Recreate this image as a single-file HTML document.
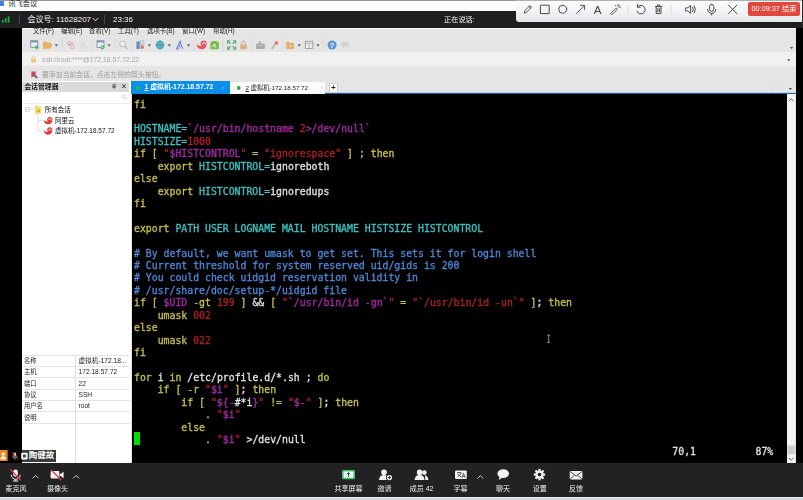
<!DOCTYPE html>
<html lang="zh">
<head>
<meta charset="utf-8">
<title>讯飞会议</title>
<style>
*{margin:0;padding:0;box-sizing:border-box}
html,body{width:803px;height:500px;overflow:hidden;background:#000}
body{position:relative;font-family:"Liberation Sans","Noto Sans CJK SC",sans-serif;color:#000}
.a{position:absolute;white-space:nowrap}
#root{position:absolute;left:0;top:0;width:803px;height:500px;overflow:hidden;filter:blur(0.400px)}
svg.ov{position:absolute;left:0;top:0;width:803px;height:500px;pointer-events:none}
#title{left:0;top:0;width:803px;height:10.600px;background:#fcfcfc;border-top:1px solid #9a9a9a}
#title .t{left:8.200px;top:-2.300px;font-size:7.300px;line-height:10px;color:#1a1a1a}
#title .ic{left:0;top:0.400px;width:3.500px;height:5px;background:#4a80e0}
#meet{left:0;top:10.600px;width:803px;height:17.400px;background:#1f1f1f}
#meet .t{font-size:8px;line-height:16px;color:#f4f4f4;top:1.400px}
#meet .sep{top:4px;width:1px;height:9px;background:#484848}
#sharebar{left:516px;top:0;width:286px;height:21.600px;background:linear-gradient(#fbfbfb,#f2f3f5 50%,#e4e6ea);border-top:1px solid #b0b0b0;border-radius:0 0 0 3px}
#endbtn{left:748px;top:2.200px;width:52px;height:14px;background:#e0483e;border-radius:2px;color:#fff;font-size:7.300px;line-height:14px;text-align:center}
#xs{left:22px;top:27.700px;width:773.500px;height:436px;background:#e5e5e5}
#xstop{left:22px;top:27.700px;width:773.500px;height:1.300px;background:#f6f6f6}
#menu .t{font-size:6.400px;line-height:8px;color:#222;top:26.500px}
#addr{left:22px;top:52.400px;width:773.500px;height:13.400px;background:#f1f1f1}
#addr .t{left:20px;top:0.200px;font-size:6.850px;line-height:14px;color:#a6a6a6}
#hint .t{left:42px;top:66.500px;font-size:6.850px;line-height:15px;color:#9a9a9a}
#side{left:22px;top:81px;width:109.500px;height:382.600px;background:#fff;border-right:1.500px solid #e2e2e2}
#sidehd{left:22px;top:81.600px;width:107.200px;height:10px;background:#d9d9d9}
#sidehd .t{left:2.200px;top:-1px;font-size:6.900px;line-height:11px;color:#1c1c1c;font-weight:bold}
#srch{left:22px;top:102.500px;width:108px;height:1px;background:#ececec}
.tr{font-size:6.500px;line-height:10px;color:#111}
.pr{left:22px;width:108px;height:1px;background:#e4e4e4}
.pk{left:24px;font-size:6.300px;line-height:10px;color:#222}
.pv{left:78.500px;font-size:6.650px;line-height:10px;color:#222}
#tab1{left:131.200px;top:81.200px;width:98.600px;height:13.200px;background:#0b8ee8;color:#fff;font-size:6.900px;line-height:12.600px;font-weight:bold}
#tab2{left:230px;top:82px;width:95px;height:12px;background:#fbfbfb;color:#222;font-size:6.250px;line-height:11.600px}
#tabplus{left:329px;top:83px;width:8.600px;height:9.600px;background:#fafafa;border:0.700px solid #cfcfcf;font-size:8px;line-height:7.600px;text-align:center;color:#222;font-weight:bold}
#blue{left:131.500px;top:91.400px;width:664px;height:3px;background:linear-gradient(#dbe6f2 0,#dbe6f2 45%,#2a6aa8 80%,#0a2440 100%)}
#term{left:131.500px;top:94.400px;width:655.500px;height:369.200px;background:#000}
#term pre,.st{position:absolute;font-family:"DejaVu Sans Mono","Liberation Mono",monospace;font-size:9.830px;line-height:12.420px;color:#e0e0e0;font-weight:normal;-webkit-text-stroke:0.300px currentColor}
#term pre{left:2.500px;top:4.200px}
.y{color:#c8c04c}.c{color:#3cc4c4}.m{color:#a628a6}.r{color:#ac2222}.b{color:#4e88d8}
#cursor{left:2.500px;top:337.900px;width:6px;height:12.400px;background:#00dc00}
#sb{left:786.700px;top:94.400px;width:8.800px;height:369.200px;background:#f4f4f4}
#tag{left:21.700px;top:450.200px;width:34px;height:11.600px;background:#3a3a3a;color:#fff;font-size:8.500px;line-height:11.600px;font-weight:bold}
#bot{left:0;top:463.400px;width:803px;height:34.100px;background:#222224}
#bot .l{font-size:7px;line-height:9px;color:#f0f0f0;top:21px;text-align:center}
#strip{left:0;top:497.400px;width:803px;height:3px;background:linear-gradient(#e4eaee,#ccd2d8)}
</style>
</head>
<body>
<div id="root">
<div id="title" class="a"><div class="a ic"></div><div class="a t">讯飞会议</div></div>
<div id="meet" class="a">
  <svg class="a" style="left:2.400px;top:5.400px" width="8" height="6.600" viewBox="0 0 8 9" preserveAspectRatio="none"><rect x="0" y="5.500" width="1.700" height="3.500" fill="#17b24a"/><rect x="2.900" y="3" width="1.700" height="6" fill="#17b24a"/><rect x="5.800" y="0.500" width="1.700" height="8.500" fill="#17b24a"/></svg>
  <div class="a sep" style="left:19px"></div>
  <div class="a t" style="left:27.600px">会议号: 11628207</div>
  <svg class="a" style="left:92px;top:6px" width="7" height="5" viewBox="0 0 7 5"><path d="M0.800 1 L3.500 3.800 L6.200 1" stroke="#ddd" stroke-width="1" fill="none"/></svg>
  <div class="a sep" style="left:104px"></div>
  <div class="a t" style="left:113px">23:36</div>
  <div class="a t" style="left:444px;font-size:7.200px">正在说话:</div>
</div>
<div id="sharebar" class="a"></div>
<div class="a" style="left:802px;top:0;width:1px;height:28px;background:#2a2a2a"></div>
<div id="endbtn" class="a">00:09:37 结束</div>

<div id="xs" class="a"></div>
<div id="xstop" class="a"></div>
<div id="menu">
  <div class="a t" style="left:33px">文件(F)</div>
  <div class="a t" style="left:61px">编辑(E)</div>
  <div class="a t" style="left:89px">查看(V)</div>
  <div class="a t" style="left:118px">工具(T)</div>
  <div class="a t" style="left:147px">选项卡(B)</div>
  <div class="a t" style="left:182px">窗口(W)</div>
  <div class="a t" style="left:213px">帮助(H)</div>
</div>
<div id="addr" class="a"><div class="a t">ssh://root:****@172.18.57.72:22</div></div>
<div id="hint"><div class="a t">要添加当前会话，点击左侧的箭头按钮。</div></div>
<div id="side" class="a"></div>
<div id="sidehd" class="a"><div class="a t">会话管理器</div></div>
<div id="srch" class="a"></div>
<div class="a tr" style="left:44.700px;top:104.900px">所有会话</div>
<div class="a tr" style="left:55px;top:115.600px">阿里云</div>
<div class="a tr" style="left:55px;top:126px">虚拟机-172.18.57.72</div>

<div class="a pr" style="top:354.600px"></div>
<div class="a pr" style="top:365.900px"></div>
<div class="a pr" style="top:377.200px"></div>
<div class="a pr" style="top:388.500px"></div>
<div class="a pr" style="top:399.800px"></div>
<div class="a pr" style="top:411.300px"></div>
<div class="a pr" style="top:422.800px"></div>
<div class="a" style="left:75px;top:354.600px;width:1px;height:109px;background:#e0e0e0"></div>
<div class="a pk" style="top:356px">名称</div><div class="a pv" style="top:356px">虚拟机-172.18...</div>
<div class="a pk" style="top:367.300px">主机</div><div class="a pv" style="top:367.300px">172.18.57.72</div>
<div class="a pk" style="top:378.500px">端口</div><div class="a pv" style="top:378.500px">22</div>
<div class="a pk" style="top:389.700px">协议</div><div class="a pv" style="top:389.700px">SSH</div>
<div class="a pk" style="top:401.200px">用户名</div><div class="a pv" style="top:401.200px">root</div>
<div class="a pk" style="top:412.500px">说明</div>

<div id="blue" class="a"></div>
<div id="tab1" class="a"><span style="margin-left:13.200px"><u>1</u> 虚拟机-172.18.57.72</span></div>
<div id="tab2" class="a"><span style="margin-left:15.500px"><u>2</u> 虚拟机-172.18.57.72</span></div>
<div id="tabplus" class="a">+</div>
<div id="term" class="a">
<pre><span class="y">fi</span>

<span class="c">HOSTNAME</span><span class="c">=</span><span class="m">`/usr/bin/hostname </span><span class="r">2</span><span class="m">&gt;/dev/null`</span>
<span class="c">HISTSIZE</span><span class="c">=</span><span class="r">1000</span>
<span class="y">if [ </span><span class="r">"</span><span class="m">$HISTCONTROL</span><span class="r">"</span><span class="y"> = </span><span class="r">"ignorespace"</span><span class="y"> ] ; then</span>
    <span class="y">export</span> <span class="c">HISTCONTROL=</span>ignoreboth
<span class="y">else</span>
    <span class="y">export</span> <span class="c">HISTCONTROL=</span>ignoredups
<span class="y">fi</span>

<span class="y">export</span> <span class="c">PATH USER LOGNAME MAIL HOSTNAME HISTSIZE HISTCONTROL</span>

<span class="b"># By default, we want umask to get set. This sets it for login shell</span>
<span class="b"># Current threshold for system reserved uid/gids is 200</span>
<span class="b"># You could check uidgid reservation validity in</span>
<span class="b"># /usr/share/doc/setup-*/uidgid file</span>
<span class="y">if [ </span><span class="m">$UID</span> <span class="y">-gt</span> <span class="r">199</span><span class="y"> ]</span> &amp;&amp; <span class="y">[ </span><span class="r">"</span><span class="m">`/usr/bin/id -gn`</span><span class="r">"</span><span class="y"> = </span><span class="r">"`/usr/bin/id -un`"</span><span class="y"> ]</span>; <span class="y">then</span>
    <span class="y">umask</span> <span class="r">002</span>
<span class="y">else</span>
    <span class="y">umask</span> <span class="r">022</span>
<span class="y">fi</span>

<span class="y">for</span> i <span class="y">in</span> /etc/profile.d/*.sh ; <span class="y">do</span>
    <span class="y">if [ -r </span><span class="r">"</span><span class="m">$i</span><span class="r">"</span><span class="y"> ]</span>; <span class="y">then</span>
        <span class="y">if [ </span><span class="r">"</span><span class="m">${-</span>#*i<span class="m">}</span><span class="r">"</span><span class="y"> != </span><span class="r">"</span><span class="m">$-</span><span class="r">"</span><span class="y"> ]</span>; <span class="y">then</span>
            <span class="y">. </span><span class="r">"</span><span class="m">$i</span><span class="r">"</span>
        <span class="y">else</span>
            <span class="y">. </span><span class="r">"</span><span class="m">$i</span><span class="r">"</span> &gt;/dev/null</pre>
  <div id="cursor" class="a"></div>
  <div class="a st" style="left:540.800px;top:352px">70,1</div>
  <div class="a st" style="left:624px;top:352px">87%</div>
</div>
<div id="sb" class="a"></div>
<div id="tag" class="a"><span style="margin-left:7.100px">陶健故</span></div>

<div id="bot" class="a">
  <div class="a l" style="left:0;width:32px">麦克风</div>
  <div class="a l" style="left:41.400px;width:32px">摄像头</div>
  <div class="a l" style="left:329.400px;width:38px">共享屏幕</div>
  <div class="a l" style="left:371.500px;width:26px">邀请</div>
  <div class="a l" style="left:401.600px;width:40px">成员 42</div>
  <div class="a l" style="left:447.400px;width:26px">字幕</div>
  <div class="a l" style="left:490px;width:26px">聊天</div>
  <div class="a l" style="left:526.700px;width:26px">设置</div>
  <div class="a l" style="left:563px;width:26px">反馈</div>
</div>
<div id="strip" class="a"></div>
<svg class="ov" viewBox="0 0 803 500">
<g transform="translate(0 0.500)" opacity="0.820"><rect x="30.7" y="40.3" width="7" height="6.4" fill="#e8f0f8" stroke="#5c7fa6" stroke-width="0.9"/><rect x="30.7" y="40.3" width="7" height="1.6" fill="#5c7fa6"/><path d="M36.6 45v4M34.6 47h4" stroke="#2fa84a" stroke-width="1.3"/>
<path d="M43 41h3.4l1 1.2h3.2l1.6 2.4-1.6 3.6H43z" fill="#e9a443"/>
<path d="M54.699999999999996 44.0h3.2l-1.6 2z" fill="#222"/>
<path d="M62.4 39V50" stroke="#c4c4c4" stroke-width="0.8" stroke-dasharray="1 1"/>
<g stroke="#e58a8a" stroke-width="0.9" fill="none"><circle cx="69" cy="42.5" r="1.6"/><circle cx="72.6" cy="46.6" r="1.8"/><path d="M68 45.5l5.6-3.4"/></g>
<g stroke="#d2d2d2" stroke-width="0.9" fill="none"><circle cx="81" cy="42.5" r="1.6"/><circle cx="84.6" cy="46.6" r="1.8"/><path d="M80 46.5l5.6-4.4"/></g>
<path d="M92 39V50" stroke="#c4c4c4" stroke-width="0.8" stroke-dasharray="1 1"/>
<rect x="97" y="40.3" width="7" height="6.6" fill="#eef3f8" stroke="#5c7fa6" stroke-width="0.9"/><rect x="97" y="40.3" width="7" height="1.6" fill="#5c7fa6"/><circle cx="102.4" cy="46.8" r="2" fill="#2fa84a"/><circle cx="102.4" cy="46.8" r="0.7" fill="#fff"/>
<path d="M107.4 44.0h3.2l-1.6 2z" fill="#222"/>
<path d="M115 39V50" stroke="#c4c4c4" stroke-width="0.8" stroke-dasharray="1 1"/>
<circle cx="122.6" cy="43.4" r="2.9" fill="#f4f4f4" stroke="#a8a8a8" stroke-width="0.9"/><path d="M124.8 45.8l2.6 2.8" stroke="#a8a8a8" stroke-width="1.3"/>
<path d="M132 39V50" stroke="#c4c4c4" stroke-width="0.8" stroke-dasharray="1 1"/>
<rect x="136.4" y="41" width="3.4" height="7.4" fill="#4a78b8"/><rect x="140.4" y="40.4" width="3.6" height="3.4" fill="#d8dde6" stroke="#8090a8" stroke-width="0.5"/><rect x="140.6" y="45" width="3.2" height="3.2" fill="#d9534f"/>
<path d="M147.70000000000002 44.0h3.2l-1.6 2z" fill="#222"/>
<circle cx="160" cy="44.5" r="4.4" fill="#2f97a6"/><path d="M156 43.5q4 -1.5 8 0M156 46q4 1.5 8 0" stroke="#5cb8c4" stroke-width="0.6" fill="none"/>
<path d="M167.70000000000002 44.0h3.2l-1.6 2z" fill="#222"/>
<path d="M176.4 48.6l3.6-8 1 .4-2.6 7.6zM179.6 40.6l3.4 8" stroke="#4a66c8" stroke-width="0.9" fill="none"/><path d="M176 46.4h7" stroke="#7a90d8" stroke-width="0.7"/>
<path d="M187.0 44.0h3.2l-1.6 2z" fill="#222"/>
<path d="M193.5 39V50" stroke="#c4c4c4" stroke-width="0.8" stroke-dasharray="1 1"/>
<g transform="translate(202 44.3) scale(1.189)"><path d="M-4.600 -0.400q0.500 4.200 4.300 4.100q3.800 -0.300 4 -3.600l-3.200 0.700q-2.600 0.700 -5.100 -1.200z" fill="#e0383c"/><circle cx="1.400" cy="-1.100" r="2.600" fill="#e0383c"/><path d="M0.300 -0.500q0.200 -1.700 1.700 -1.400q1.300 0.500 0.500 1.700" stroke="#fff" stroke-width="0.800" fill="none"/></g>
<path d="M210.4 42.2l2-1.6h3.6l3 1.6v5.6l-1 1h-7.6z" fill="#63b32e"/><path d="M212.4 46.6q.6-3 3.4-2.6q-1.6.4-1.4 1.8q.4 1.2 2 .6" stroke="#fff" stroke-width="0.8" fill="none"/>
<path d="M223 39V50" stroke="#c4c4c4" stroke-width="0.8" stroke-dasharray="1 1"/>
<g stroke="#2fa060" stroke-width="1.1" fill="none"><path d="M227.6 43v-2.6h2.6M233 40.4h2.6V43M235.6 46v2.6H233M230.2 48.600h-2.6V46"/><path d="M228 40.800l2.600 2.600M235.200 40.800l-2.600 2.600M235.200 48.200l-2.600-2.600M228 48.200l2.600-2.600"/></g>
<rect x="240.200" y="44" width="6.600" height="4.800" rx="0.600" fill="#d9a566"/><path d="M241.600 44v-1.600a1.900 1.900 0 0 1 3.800 0V44" stroke="#c8a070" stroke-width="1" fill="none"/>
<path d="M251.4 39V50" stroke="#c4c4c4" stroke-width="0.8" stroke-dasharray="1 1"/>
<rect x="256.200" y="43" width="8.600" height="5.400" rx="0.600" fill="#9a9a9a"/><rect x="258.600" y="40.800" width="2.600" height="2.400" fill="#a8a8a8"/><path d="M257.400 45h6.200" stroke="#c8c8c8" stroke-width="0.600"/>
<circle cx="276.400" cy="42.400" r="1.900" fill="#d9605c"/><path d="M275 43.800l-3.200 4.600" stroke="#9a9aa0" stroke-width="1.200"/>
<path d="M283 39V50" stroke="#c4c4c4" stroke-width="0.8" stroke-dasharray="1 1"/>
<path d="M286.200 41.400h3l1 1.200h3.800v5.800h-7.800z" fill="#e9a250"/><circle cx="290.400" cy="45.600" r="1.200" fill="#f4d4a8"/>
<path d="M297.59999999999997 44.0h3.2l-1.6 2z" fill="#222"/>
<rect x="305.400" y="40.800" width="7.400" height="7.200" fill="#eceff2" stroke="#8a9098" stroke-width="0.900"/><path d="M305.400 42.800h7.400M309.100 42.800v5.200" stroke="#8a9098" stroke-width="0.700"/>
<path d="M316.4 44.0h3.2l-1.6 2z" fill="#222"/>
<path d="M323 39V50" stroke="#c4c4c4" stroke-width="0.8" stroke-dasharray="1 1"/>
<circle cx="332.100" cy="44.500" r="4.500" fill="#3a84d4"/><text x="332.100" y="47.300" font-size="7.500" font-weight="bold" fill="#fff" text-anchor="middle" font-family="Liberation Sans,sans-serif">?</text>
<path d="M341.400 41.200h7.400v5h-4.400l-1.600 1.800v-1.800h-1.400z" fill="#d0d0d0"/>
<path d="M790.0 46.5h3.2l-1.6 2z" fill="#222"/>
<path d="M787.1999999999999 58.800000000000004h3.2l-1.6 2z" fill="#222"/>
<path d="M788.8 87.4h3.2l-1.6 2z" fill="#222"/>
<path d="M773 86l-1.600 2 1.600 2zM778 86l1.600 2-1.600 2z" fill="#d4d4d4"/></g>
<g transform="translate(527.500 9.200) scale(0.900) translate(-527.500 -9.600)"><path d="M524 13.600l.600-2.400 5.600-5.600 1.800 1.800-5.600 5.600zM529.200 6.600l1.800 1.800" stroke="#4a4a4a" stroke-width="1" fill="none" stroke-linecap="round" stroke-linejoin="round"/></g>
<rect x="540.800" y="5.200" width="8.400" height="8.400" stroke="#4a4a4a" stroke-width="1" fill="none" stroke-linecap="round" stroke-linejoin="round"/>
<circle cx="562.700" cy="9.300" r="4" stroke="#4a4a4a" stroke-width="1" fill="none" stroke-linecap="round" stroke-linejoin="round"/>
<g transform="translate(580.400 9.400) scale(0.900) translate(-580.400 -9.500)"><path d="M576 14l8.800-8.800M580.400 5h4.600v4.600" stroke="#4a4a4a" stroke-width="1" fill="none" stroke-linecap="round" stroke-linejoin="round"/></g>
<text x="597.700" y="13.800" font-size="11.600" fill="#444" text-anchor="middle" font-family="Liberation Sans,sans-serif">A</text>
<g transform="translate(615.400 9.400) scale(0.880) translate(-615.400 -9.800)"><path d="M610.400 14.200l6-6 1.400 1.400-6 6zM618.400 4.200v1.600M620.200 5.200l-1 1M621 7.400h-1.400M615.400 5.200l.8.800" stroke="#4a4a4a" stroke-width="1" fill="none" stroke-linecap="round" stroke-linejoin="round"/></g>
<path d="M627.700 4.500v10M671 4.500v10" stroke="#dcdcdc" stroke-width="1"/>
<path d="M637.800 6.600a4.300 4.300 0 1 1 -1 4.600M637.400 4.400v2.800h2.800" stroke="#4a4a4a" stroke-width="1" fill="none" stroke-linecap="round" stroke-linejoin="round"/>
<path d="M655.400 6.600h6.400M656.200 6.600v7h4.800v-7M657.400 6.400v-1.400h2.400v1.400M657.800 8.600v3.200M659.400 8.600v3.200" stroke="#4a4a4a" stroke-width="1" fill="none" stroke-linecap="round" stroke-linejoin="round"/>
<path d="M686 7.800h1.800l2.800-2.400v8l-2.800-2.400H686zM692.600 7.200q1.600 2.200 0 4.400M694.200 5.800q2.600 3.600 0 7.200" stroke="#4a4a4a" stroke-width="1" fill="none" stroke-linecap="round" stroke-linejoin="round"/>
<rect x="709.600" y="4.400" width="4.200" height="7" rx="2.100" stroke="#4a4a4a" stroke-width="1" fill="none" stroke-linecap="round" stroke-linejoin="round"/><path d="M707.600 9.400a4.100 4.100 0 0 0 8.200 0M711.700 13.600v1.400" stroke="#4a4a4a" stroke-width="1" fill="none" stroke-linecap="round" stroke-linejoin="round"/>
<path d="M728.400 5l8.600 8.800M737 5l-8.600 8.800" stroke="#4a4a4a" stroke-width="1" fill="none" stroke-linecap="round" stroke-linejoin="round"/>
<rect x="25.400" y="107.400" width="4" height="4" fill="#fff" stroke="#c0c0c0" stroke-width="0.600"/><path d="M26.400 109.400h2" stroke="#888" stroke-width="0.600"/>
<path d="M30 109.400h4M38 114v17h6M38 120.600h6" stroke="#c8c8c8" stroke-width="0.600" fill="none"/>
<path d="M35 105.600h3l.8 1h2.400v7.200H35z" fill="#f2dc6a"/><rect x="37.600" y="109.600" width="2.400" height="2.600" fill="#c8b040"/>
<g transform="translate(48.4 120.6) scale(1.000)"><path d="M-4.600 -0.400q0.500 4.200 4.300 4.100q3.800 -0.300 4 -3.600l-3.200 0.700q-2.600 0.700 -5.100 -1.200z" fill="#e0383c"/><circle cx="1.400" cy="-1.100" r="2.600" fill="#e0383c"/><path d="M0.300 -0.500q0.200 -1.700 1.700 -1.400q1.300 0.500 0.500 1.700" stroke="#fff" stroke-width="0.800" fill="none"/></g>
<g transform="translate(48.4 131) scale(1.000)"><path d="M-4.600 -0.400q0.500 4.200 4.300 4.100q3.800 -0.300 4 -3.600l-3.200 0.700q-2.600 0.700 -5.100 -1.200z" fill="#e0383c"/><circle cx="1.400" cy="-1.100" r="2.600" fill="#e0383c"/><path d="M0.300 -0.500q0.200 -1.700 1.700 -1.400q1.300 0.500 0.500 1.700" stroke="#fff" stroke-width="0.800" fill="none"/></g>
<path d="M113 84.400h2.200v2.600H113zM112.400 87h3.400M114.100 87v1.800" stroke="#333" stroke-width="0.700" fill="none"/>
<path d="M122.200 84.400l3.400 3.600M125.600 84.400l-3.400 3.600" stroke="#222" stroke-width="0.900"/>
<circle cx="124" cy="96.600" r="1.800" fill="none" stroke="#c8c8c8" stroke-width="0.700"/><path d="M125.400 98l1.600 1.800" stroke="#c8c8c8" stroke-width="0.900"/>
<circle cx="137.700" cy="88" r="2" fill="#1fc04a"/><circle cx="238.700" cy="88" r="1.900" fill="#22b040"/>
<path d="M222 86.400l2.400 2.600M224.400 86.400l-2.400 2.600" stroke="#6ab8ee" stroke-width="0.600"/><path d="M320.600 86.400l2.400 2.600M323 86.400l-2.400 2.600" stroke="#ccc" stroke-width="0.600"/>
<g transform="translate(1.600 0.300)"><rect x="29.400" y="58.400" width="5" height="3.800" rx="0.500" fill="#ecc878"/><path d="M30.400 58.400v-1a1.500 1.500 0 0 1 3 0v1" stroke="#dcc080" stroke-width="0.800" fill="none"/></g>
<g transform="translate(2 1)"><path d="M29.400 70.400h4.200v6.400l-2.100-1.600-2.100 1.600z" fill="#c8464e"/><path d="M33 73.600l3.400 3.200-1.600.2-1 .8z" fill="#3a66b8"/></g>
<path d="M788.800 101.200l2.400-2.400 2.400 2.400" stroke="#555" stroke-width="0.900" fill="none"/><path d="M788.800 457.800l2.400 2.400 2.400-2.400" stroke="#555" stroke-width="0.900" fill="none"/><rect x="787.400" y="445.600" width="7.800" height="8.800" fill="#cdcdcd"/>
<path d="M547.400 335.200h2.600M547.400 342.400h2.600M548.700 335.200v7.200" stroke="#cfcfcf" stroke-width="0.700" fill="none"/>
<rect x="0" y="450" width="7.600" height="11" fill="#f08a24"/><circle cx="3.200" cy="454" r="1.600" fill="#fff"/><path d="M0.400 459.200q.4-3 2.800-3t2.800 3z" fill="#fff"/>
<rect x="13.600" y="452.400" width="2.600" height="4.400" rx="1.300" fill="#d8c8c0"/><path d="M12.400 455.600a2.500 2.500 0 0 0 5 0M14.900 458.200v1.400" stroke="#d8c8c0" stroke-width="0.700" fill="none"/><path d="M12 452l6 7.400" stroke="#d8393e" stroke-width="0.900"/>
<rect x="21.200" y="452.800" width="6.400" height="6.600" rx="1" fill="#fff"/><rect x="23" y="454.600" width="2.800" height="2.800" rx="0.400" fill="#3a3a3a"/>
<rect x="13.200" y="469.600" width="4.600" height="7.200" rx="2.300" fill="#f2f2f2"/><path d="M11.200 474.800a4.500 4.500 0 0 0 9 0M15.600 479.400v1.400M13 481h5.200" stroke="#f2f2f2" stroke-width="1" fill="none"/><path d="M10.400 469.200l10.400 11" stroke="#e0393e" stroke-width="1.300"/>
<path d="M32.600 478.400l3-3 3 3" stroke="#ddd" stroke-width="0.900" fill="none"/>
<rect x="50.600" y="471" width="8.800" height="7.600" rx="1" fill="#f2f2f2"/><path d="M59.800 474.400l3.800-2.600v6.400l-3.800-2.600z" fill="#f2f2f2"/><path d="M51 469.600l10.400 10.600" stroke="#e0393e" stroke-width="1.300"/>
<path d="M73.200 478.400l3-3 3 3" stroke="#ddd" stroke-width="0.900" fill="none"/>
<rect x="342" y="470" width="13" height="9.200" rx="1.400" fill="#3ec46a"/><rect x="343.600" y="471.400" width="9.800" height="6.400" rx="0.800" fill="#f4fff6"/><path d="M348.500 476.800v-4M346.700 474.400l1.800-1.800 1.800 1.800" stroke="#1c5a30" stroke-width="1" fill="none"/>
<circle cx="384" cy="472.200" r="2.800" fill="#f2f2f2"/><path d="M379 480q.4-5 5-5t5 5z" fill="#f2f2f2"/><circle cx="389.400" cy="477.600" r="3.400" fill="#222" /><circle cx="389.400" cy="477.600" r="2.600" fill="#f2f2f2"/><path d="M389.400 476v3.200M387.800 477.600h3.200" stroke="#222" stroke-width="0.900"/>
<circle cx="419.600" cy="472.400" r="2.800" fill="#f2f2f2"/><path d="M414.600 480q.4-5 5-5t5 5z" fill="#f2f2f2"/><circle cx="424.400" cy="472.600" r="2.300" fill="#f2f2f2"/><path d="M425 475.200q3 .6 3.400 4.800h-3" fill="#f2f2f2"/>
<rect x="455" y="470.400" width="11.800" height="8.600" rx="1.200" fill="#f2f2f2"/><path d="M457 472.600h4.400M459.200 472v.8M457.400 476.800q3-1.400 3.600-4M457.800 474q1.400 2 3.400 2.800" stroke="#222" stroke-width="0.700" fill="none"/><path d="M461.800 477.800l1.700-4.600 1.700 4.600M462.400 476.400h2.200" stroke="#222" stroke-width="0.700" fill="none"/>
<path d="M477.400 478.600l3-3 3 3" stroke="#ddd" stroke-width="0.900" fill="none"/>
<ellipse cx="503.200" cy="473.600" rx="5.800" ry="4.400" fill="#f2f2f2"/><path d="M499.600 476.600l-.8 3.400 3.600-2.400z" fill="#f2f2f2"/>
<rect x="538.4" y="468.90000000000003" width="2.200" height="3" fill="#f2f2f2" transform="rotate(0 539.5 474.6)"/><rect x="538.4" y="468.90000000000003" width="2.200" height="3" fill="#f2f2f2" transform="rotate(45 539.5 474.6)"/><rect x="538.4" y="468.90000000000003" width="2.200" height="3" fill="#f2f2f2" transform="rotate(90 539.5 474.6)"/><rect x="538.4" y="468.90000000000003" width="2.200" height="3" fill="#f2f2f2" transform="rotate(135 539.5 474.6)"/><rect x="538.4" y="468.90000000000003" width="2.200" height="3" fill="#f2f2f2" transform="rotate(180 539.5 474.6)"/><rect x="538.4" y="468.90000000000003" width="2.200" height="3" fill="#f2f2f2" transform="rotate(225 539.5 474.6)"/><rect x="538.4" y="468.90000000000003" width="2.200" height="3" fill="#f2f2f2" transform="rotate(270 539.5 474.6)"/><rect x="538.4" y="468.90000000000003" width="2.200" height="3" fill="#f2f2f2" transform="rotate(315 539.5 474.6)"/><circle cx="539.5" cy="474.6" r="4.200" fill="#f2f2f2"/><circle cx="539.5" cy="474.6" r="1.800" fill="#222"/>
<rect x="569.800" y="471" width="12.600" height="8.400" rx="0.800" fill="#f2f2f2"/><path d="M570.200 471.600l5.900 4.400 5.900-4.400M570.200 479l4.400-3.800M582 479l-4.400-3.800" stroke="#222" stroke-width="0.800" fill="none"/>
</svg>
</div>
</body>
</html>
